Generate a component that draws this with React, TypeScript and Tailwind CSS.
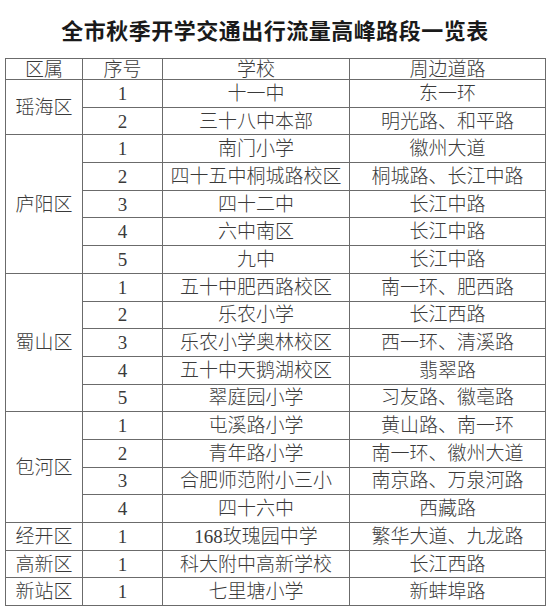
import React from 'react'

type Row = { no: number; school: string; road: string }
type District = { name: string; rows: Row[] }

const districts: District[] = [
  {
    name: '瑶海区',
    rows: [
      { no: 1, school: '十一中', road: '东一环' },
      { no: 2, school: '三十八中本部', road: '明光路、和平路' },
    ],
  },
  {
    name: '庐阳区',
    rows: [
      { no: 1, school: '南门小学', road: '徽州大道' },
      { no: 2, school: '四十五中桐城路校区', road: '桐城路、长江中路' },
      { no: 3, school: '四十二中', road: '长江中路' },
      { no: 4, school: '六中南区', road: '长江中路' },
      { no: 5, school: '九中', road: '长江中路' },
    ],
  },
  {
    name: '蜀山区',
    rows: [
      { no: 1, school: '五十中肥西路校区', road: '南一环、肥西路' },
      { no: 2, school: '乐农小学', road: '长江西路' },
      { no: 3, school: '乐农小学奥林校区', road: '西一环、清溪路' },
      { no: 4, school: '五十中天鹅湖校区', road: '翡翠路' },
      { no: 5, school: '翠庭园小学', road: '习友路、徽亳路' },
    ],
  },
  {
    name: '包河区',
    rows: [
      { no: 1, school: '屯溪路小学', road: '黄山路、南一环' },
      { no: 2, school: '青年路小学', road: '南一环、徽州大道' },
      { no: 3, school: '合肥师范附小三小', road: '南京路、万泉河路' },
      { no: 4, school: '四十六中', road: '西藏路' },
    ],
  },
  { name: '经开区', rows: [{ no: 1, school: '168玫瑰园中学', road: '繁华大道、九龙路' }] },
  { name: '高新区', rows: [{ no: 1, school: '科大附中高新学校', road: '长江西路' }] },
  { name: '新站区', rows: [{ no: 1, school: '七里塘小学', road: '新蚌埠路' }] },
]

const cell = 'border border-[#6b6b6b] p-0 text-center align-middle leading-none font-light'

export default function App() {
  return (
    <div className="w-[550px] h-[607px] overflow-hidden bg-white text-[#3a3a3a] font-['Liberation_Serif','Noto_Sans_CJK_SC',serif]">
      <div className="h-[58px] flex items-center justify-center">
        <h1 className="text-[22px] font-bold text-[#1a1a1a] font-['Noto_Sans_CJK_SC',sans-serif] tracking-[0.5px]">
          全市秋季开学交通出行流量高峰路段一览表
        </h1>
      </div>
      <table className="ml-[5px] w-[540px] table-fixed border-collapse text-[19px]">
        <colgroup>
          <col className="w-[77px]" />
          <col className="w-[80px]" />
          <col className="w-[187px]" />
          <col className="w-[196px]" />
        </colgroup>
        <thead>
          <tr className="h-[21px]">
            <th className={cell}>区属</th>
            <th className={cell}>序号</th>
            <th className={cell}>学校</th>
            <th className={cell}>周边道路</th>
          </tr>
        </thead>
        <tbody>
          {districts.map((d) =>
            d.rows.map((r, i) => (
              <tr key={d.name + r.no} className="h-[27.7px]">
                {i === 0 && (
                  <td rowSpan={d.rows.length} className={cell}>
                    {d.name}
                  </td>
                )}
                <td className={cell}>{r.no}</td>
                <td className={cell}>{r.school}</td>
                <td className={cell}>{r.road}</td>
              </tr>
            ))
          )}
        </tbody>
      </table>
    </div>
  )
}
